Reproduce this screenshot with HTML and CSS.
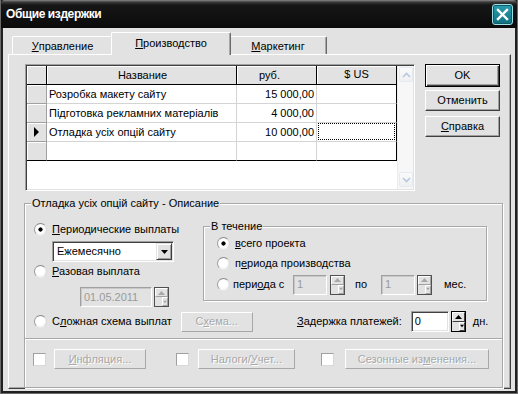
FILE: index.html
```html
<!DOCTYPE html>
<html lang="ru">
<head>
<meta charset="utf-8">
<title>Общие издержки</title>
<link rel="stylesheet" href="styles.css">
</head>
<body>
<div class="window">
  <div class="titlebar">
    <span class="title">Общие издержки</span>
    <div class="close"><svg width="13" height="13" viewBox="0 0 13 13"><path d="M2 2L11 11M11 2L2 11" stroke="#fff" stroke-width="2.4" stroke-linecap="square"/></svg></div>
  </div>
  <div class="client">
    <div class="tabs">
      <div class="tab t1"><u>У</u>правление</div>
      <div class="tab t2 active"><u>П</u>роизводство</div>
      <div class="tab t3"><u>М</u>аркетинг</div>
    </div>
    <div class="panel">
      <div class="top">
        <div class="grid">
          <div class="table">
            <div class="row head">
              <div class="c ind"></div>
              <div class="c name">Название</div>
              <div class="c rub">руб.</div>
              <div class="c usd">$ US</div>
            </div>
            <div class="row">
              <div class="c ind"></div>
              <div class="c name">Розробка макету сайту</div>
              <div class="c num">15 000,00</div>
              <div class="c usd"></div>
            </div>
            <div class="row">
              <div class="c ind"></div>
              <div class="c name">Підготовка рекламних матеріалів</div>
              <div class="c num">4 000,00</div>
              <div class="c usd"></div>
            </div>
            <div class="row">
              <div class="c ind"><svg width="6" height="10" viewBox="0 0 6 10"><path d="M0 0L5 5L0 10Z" fill="#000"/></svg></div>
              <div class="c name">Отладка усіх опцій сайту</div>
              <div class="c num">10 000,00</div>
              <div class="c usd"><span class="focus"></span></div>
            </div>
            <div class="row last">
              <div class="c ind"></div>
              <div class="c name"></div>
              <div class="c num"></div>
              <div class="c usd"></div>
            </div>
          </div>
          <div class="vscroll">
            <div class="sbtn"><svg width="9" height="6" viewBox="0 0 9 6"><path d="M1 5L4.5 1.5L8 5" fill="none" stroke="#b8c8e0" stroke-width="1.6"/></svg></div>
            <div class="strack"></div>
            <div class="sbtn"><svg width="9" height="6" viewBox="0 0 9 6"><path d="M1 1L4.5 4.5L8 1" fill="none" stroke="#b8c8e0" stroke-width="1.6"/></svg></div>
          </div>
        </div>
        <div class="btncol">
          <div class="btn default">OK</div>
          <div class="btn b2">Отменить</div>
          <div class="btn b3"><u>С</u>правка</div>
        </div>
      </div>

      <fieldset class="group main">
        <legend>Отладка усіх опцій сайту - Описание</legend>
        <div class="rowA">
          <div class="leftcol">
            <div class="opt"><span class="radio on"></span><span class="lbl"><u>П</u>ериодические выплаты</span></div>
            <div class="combo"><span class="ctext">Ежемесячно</span><span class="cbtn"><svg width="7" height="4" viewBox="0 0 7 4"><path d="M0 0H7L3.5 4Z" fill="#000"/></svg></span></div>
            <div class="opt o2"><span class="radio"></span><span class="lbl"><u>Р</u>азовая выплата</span></div>
            <div class="daterow">
              <div class="edit dis date">01.05.2011</div>
              <div class="spin dis"><span class="sp up"><svg width="7" height="4" viewBox="0 0 7 4"><path d="M0 4H7L3.5 0Z" fill="#a8a8a8"/></svg></span><span class="sp dn"><svg width="7" height="4" viewBox="0 0 7 4"><path d="M0 0H7L3.5 4Z" fill="#a8a8a8"/></svg></span></div>
            </div>
          </div>
          <fieldset class="group during">
            <legend>В течение</legend>
            <div class="opt d1"><span class="radio on"></span><span class="lbl"><u>в</u>сего проекта</span></div>
            <div class="opt d2"><span class="radio"></span><span class="lbl">п<u>е</u>риода производства</span></div>
            <div class="opt d3">
              <span class="radio"></span><span class="lbl w63">пери<u>о</u>да с</span>
              <div class="edit dis small">1</div>
              <div class="spin dis s1"><span class="sp up"><svg width="7" height="4" viewBox="0 0 7 4"><path d="M0 4H7L3.5 0Z" fill="#a8a8a8"/></svg></span><span class="sp dn"><svg width="7" height="4" viewBox="0 0 7 4"><path d="M0 0H7L3.5 4Z" fill="#a8a8a8"/></svg></span></div>
              <span class="po">по</span>
              <div class="edit dis small">1</div>
              <div class="spin dis s2"><span class="sp up"><svg width="7" height="4" viewBox="0 0 7 4"><path d="M0 4H7L3.5 0Z" fill="#a8a8a8"/></svg></span><span class="sp dn"><svg width="7" height="4" viewBox="0 0 7 4"><path d="M0 0H7L3.5 4Z" fill="#a8a8a8"/></svg></span></div>
              <span class="mes">мес.</span>
            </div>
          </fieldset>
        </div>
        <div class="rowB">
          <span class="radio"></span><span class="lbl">С<u>л</u>ожная схема выплат</span>
          <div class="btn disabled scheme">С<u>х</u>ема...</div>
          <span class="delay"><u>З</u>адержка платежей:</span>
          <div class="edit zero">0</div>
          <div class="spin s3"><span class="sp up"><svg width="7" height="4" viewBox="0 0 7 4"><path d="M0 4H7L3.5 0Z" fill="#000"/></svg></span><span class="sp dn"><svg width="7" height="4" viewBox="0 0 7 4"><path d="M0 0H7L3.5 4Z" fill="#000"/></svg></span></div>
          <span class="dn">дн.</span>
        </div>
        <div class="sep"></div>
        <div class="rowC">
          <span class="check c1"></span>
          <div class="btn disabled infl"><u>И</u>нфляция...</div>
          <span class="check c2"></span>
          <div class="btn disabled tax">Налоги/<u>У</u>чет...</div>
          <span class="check c3"></span>
          <div class="btn disabled season">Сезонные из<u>м</u>енения...</div>
        </div>
      </fieldset>
    </div>
  </div>
</div>
</body>
</html>
```

FILE: styles.css
```css
* { box-sizing: border-box; margin: 0; padding: 0; }
html, body { width: 518px; height: 394px; overflow: hidden; background: #1a1a1a; }
body { font: 11px/13px "Liberation Sans", Arial, sans-serif; color: #000; }
u { text-decoration: underline; text-underline-offset: 1px; }

.window {
  width: 518px; height: 394px;
  display: flex; flex-direction: column;
  border: 1px solid #6a6a6a;
  border-top: none;
  background: #202020;
  padding: 0 2px 2px 2px;
}
.titlebar {
  height: 29px; margin: 0 -2px;
  display: flex; align-items: center; justify-content: space-between;
  padding: 0 4px 0 5px;
  background: linear-gradient(#8a8a8a 0, #3c3c3c 2px, #161616 5px, #0b0b0b 100%);
  border-radius: 4px 4px 0 0;
  color: #fff; font-weight: bold; font-size: 12px;
}
.title { padding-top: 1px; letter-spacing: -0.4px; }
.close {
  width: 21px; height: 21px;
  display: flex; align-items: center; justify-content: center;
  border: 1px solid #9fe0e8; border-radius: 3px;
  background: linear-gradient(#2c9db0, #10707f);
  box-shadow: inset 0 0 0 1px #0b5f6c;
}

.client {
  flex: 1;
  display: flex; flex-direction: column;
  background: #e2e2e2;
  padding: 4px 4px 2px 5px;
}

.tabs { display: flex; align-items: flex-end; height: 22px; padding-left: 4px; position: relative; z-index: 1; }
.tab {
  height: 18px;
  display: flex; align-items: center; justify-content: center;
  background: #e2e2e2;
  border-top: 1px solid #fff; border-left: 1px solid #fff;
  border-right: 1px solid #6a6a6a;
  box-shadow: inset -1px 0 0 #a8a8a8;
  border-radius: 2px 2px 0 0;
  padding-top: 1px;
}
.t1 { width: 101px; }
.t2 { width: 120px; height: 23px; margin: 0 -2px -1px -2px; position: relative; z-index: 2; padding-top: 0; padding-bottom: 2px; }
.t3 { width: 98px; }

.panel {
  flex: 1;
  border-top: 1px solid #fff; border-left: 1px solid #fff;
  border-right: 1px solid #404040; border-bottom: 1px solid #404040;
  box-shadow: inset -1px -1px 0 #a8a8a8;
  padding: 9px 0 0 16px;
}

.top { display: flex; align-items: flex-start; }
.grid {
  width: 390px; height: 127px;
  display: flex;
  border: 1px solid; border-color: #a0a0a0 #fff #fff #a0a0a0;
  box-shadow: inset 1px 1px 0 #404040, inset -1px -1px 0 #e2e2e2;
  padding: 1px;
  background: #fff;
}
.table { width: 370px; background: #fff; }
.row { display: grid; grid-template-columns: 20px 190px 80px 80px; height: 19px; }
.c {
  border-right: 1px solid #d4d4d4; border-bottom: 1px solid #d4d4d4;
  display: flex; align-items: center; white-space: nowrap; overflow: hidden;
}
.c.usd { border-right-color: #000; }
.c.ind { background: #e2e2e2; justify-content: center; border-right-color: #a0a0a0; border-bottom-color: #a0a0a0; box-shadow: inset 1px 1px 0 #fff; }
.row.head .c { background: #e2e2e2; border-right-color: #000; border-bottom-color: #000; box-shadow: inset 1px 1px 0 #fff; }
.row.head .name, .row.head .usd { justify-content: center; }
.row.head .rub { padding-left: 22px; }
.row.last .c { border-bottom-color: #000; }
.c.name { padding-left: 2px; }
.c.num { justify-content: flex-end; padding-right: 2px; }
.c.usd { padding: 0 1px 1px 1px; }
.focus { display: block; width: 100%; height: 100%; outline: 1px dotted #000; outline-offset: -1px; }

.vscroll {
  width: 16px; display: flex; flex-direction: column; justify-content: space-between;
  background: #f7f7f7; border-left: 1px solid #ececec; padding: 1px 1px 2px 1px;
}
.strack { flex: 1; }
.sbtn {
  width: 14px; height: 15px;
  display: flex; align-items: center; justify-content: center;
  border: 1px solid #e6ebf2; border-radius: 2px;
  background: linear-gradient(#fafafa, #eef0f2);
}

.btncol { margin-left: 10px; display: flex; flex-direction: column; }
.btn {
  display: flex; align-items: center; justify-content: center;
  background: #e2e2e2;
  border: 1px solid; border-color: #fff #404040 #404040 #fff;
  box-shadow: inset -1px -1px 0 #a0a0a0;
  white-space: nowrap;
}
.btncol .btn { width: 75px; }
.btn.default {
  height: 23px; border: 1px solid #000;
  box-shadow: inset 1px 1px 0 #fff, inset -1px -1px 0 #404040, inset -2px -2px 0 #a0a0a0;
}
.btn.b2 { height: 21px; margin-top: 3px; }
.btn.b3 { height: 21px; margin-top: 5px; }
.btn.disabled {
  color: #a8a8a8; text-shadow: 1px 1px 0 #fff;
  border-color: #fff #a8a8a8 #a8a8a8 #fff;
  box-shadow: none;
}

.group {
  border: 1px solid #a8a8a8;
  box-shadow: inset 1px 1px 0 #fff, 1px 1px 0 #fff;
  min-width: 0;
}
.group legend { margin-left: 6px; padding: 0 1px; line-height: 13px; background: #e2e2e2; }
.main { width: 479px; margin: 6px 0 0 -1px; padding: 0 0 15px 0; height: 191px; }

.rowA { display: flex; align-items: flex-start; }
.leftcol { width: 169px; margin: 13px 0 0 9px; display: flex; flex-direction: column; }
.opt { display: flex; align-items: center; height: 13px; }
.radio {
  width: 13px; height: 13px; flex: none;
  border-radius: 50%;
  border: 1px solid; border-color: #8c8c8c #d8d8d8 #e8e8e8 #9c9c9c;
  background: radial-gradient(circle at 45% 45%, #fff 0, #fff 45%, #e4e4e4 100%);
}
.radio.on { background: radial-gradient(circle at 50% 50%, #000 0, #000 1.8px, transparent 2.4px), radial-gradient(circle at 45% 45%, #fff 0, #fff 45%, #e4e4e4 100%); }
.lbl { margin-left: 5px; white-space: nowrap; }
.combo {
  width: 122px; height: 21px; margin: 5px 0 0 18px;
  display: flex; align-items: center; justify-content: space-between;
  background: #fff;
  border: 1px solid; border-color: #a0a0a0 #fff #fff #a0a0a0;
  box-shadow: inset 1px 1px 0 #404040, inset -1px -1px 0 #e2e2e2;
  padding: 2px 2px 2px 4px;
}
.cbtn {
  width: 16px; height: 17px; margin-right: -1px;
  display: flex; align-items: center; justify-content: center;
  background: #e2e2e2;
  border: 1px solid; border-color: #e2e2e2 #404040 #404040 #e2e2e2;
  box-shadow: inset 1px 1px 0 #fff, inset -1px -1px 0 #a0a0a0;
}
.o2 { margin-top: 3px; }
.daterow { display: flex; margin: 9px 0 0 46px; }
.edit {
  height: 20px;
  display: flex; align-items: center;
  border: 1px solid; border-color: #a0a0a0 #fff #fff #a0a0a0;
  box-shadow: inset 1px 1px 0 #404040, inset -1px -1px 0 #e2e2e2;
  background: #fff; padding-left: 3px;
}
.edit.dis { background: #e2e2e2; color: #9a9a9a; box-shadow: inset 1px 1px 0 #c8c8c8; }
.date { width: 72px; }
.small { width: 34px; }
.spin {
  width: 15px; height: 20px; margin-left: 2px;
  display: flex; flex-direction: column;
  border: 1px solid #000;
}
.spin.dis { border-color: #505050; }
.sp {
  flex: 1; display: flex; align-items: center; justify-content: center;
  background: #e2e2e2;
  border: 1px solid; border-color: #fff #a0a0a0 #a0a0a0 #fff;
}

.during { width: 284px; margin-top: 10px; padding: 0 0 4px 13px; height: 81px; }
.group.during legend { margin-left: -7px; }
.d1 { margin-top: 4px; }
.d2 { margin-top: 7px; }
.d3 { margin-top: 4px; height: 21px; }
.w63 { width: 60px; margin-left: 3px; }
.spin.s1 { margin-left: 3px; }
.po { margin-left: 10px; width: 26px; }
.spin.s2 { margin-left: 2px; }
.mes { margin-left: 12px; }

.rowB { display: flex; align-items: center; height: 21px; margin: 4px 0 0 9px; }
.scheme { width: 72px; height: 20px; margin-left: 9px; }
.delay { width: 141px; text-align: right; margin-left: 8px; }
.edit.zero { width: 38px; height: 21px; margin-left: 9px; }
.spin.s3 { height: 21px; width: 15px; margin-left: 2px; }
.spin.s3 .sp { border-color: #fff #404040 #404040 #fff; }
.dn { margin-left: 7px; }

.sep { height: 2px; margin-top: 6px; border-top: 1px solid #a8a8a8; border-bottom: 1px solid #fff; }
.rowC { display: flex; align-items: center; height: 20px; margin: 9px 0 0 8px; }
.check {
  width: 13px; height: 13px; flex: none;
  background: #fff;
  border: 1px solid; border-color: #a0a0a0 #d8d8d8 #d8d8d8 #a0a0a0;
}
.infl { width: 92px; height: 20px; margin-left: 8px; }
.c2 { margin-left: 30px; }
.tax { width: 97px; height: 20px; margin-left: 9px; }
.c3 { margin-left: 26px; }
.season { width: 144px; height: 20px; margin-left: 11px; }
```
